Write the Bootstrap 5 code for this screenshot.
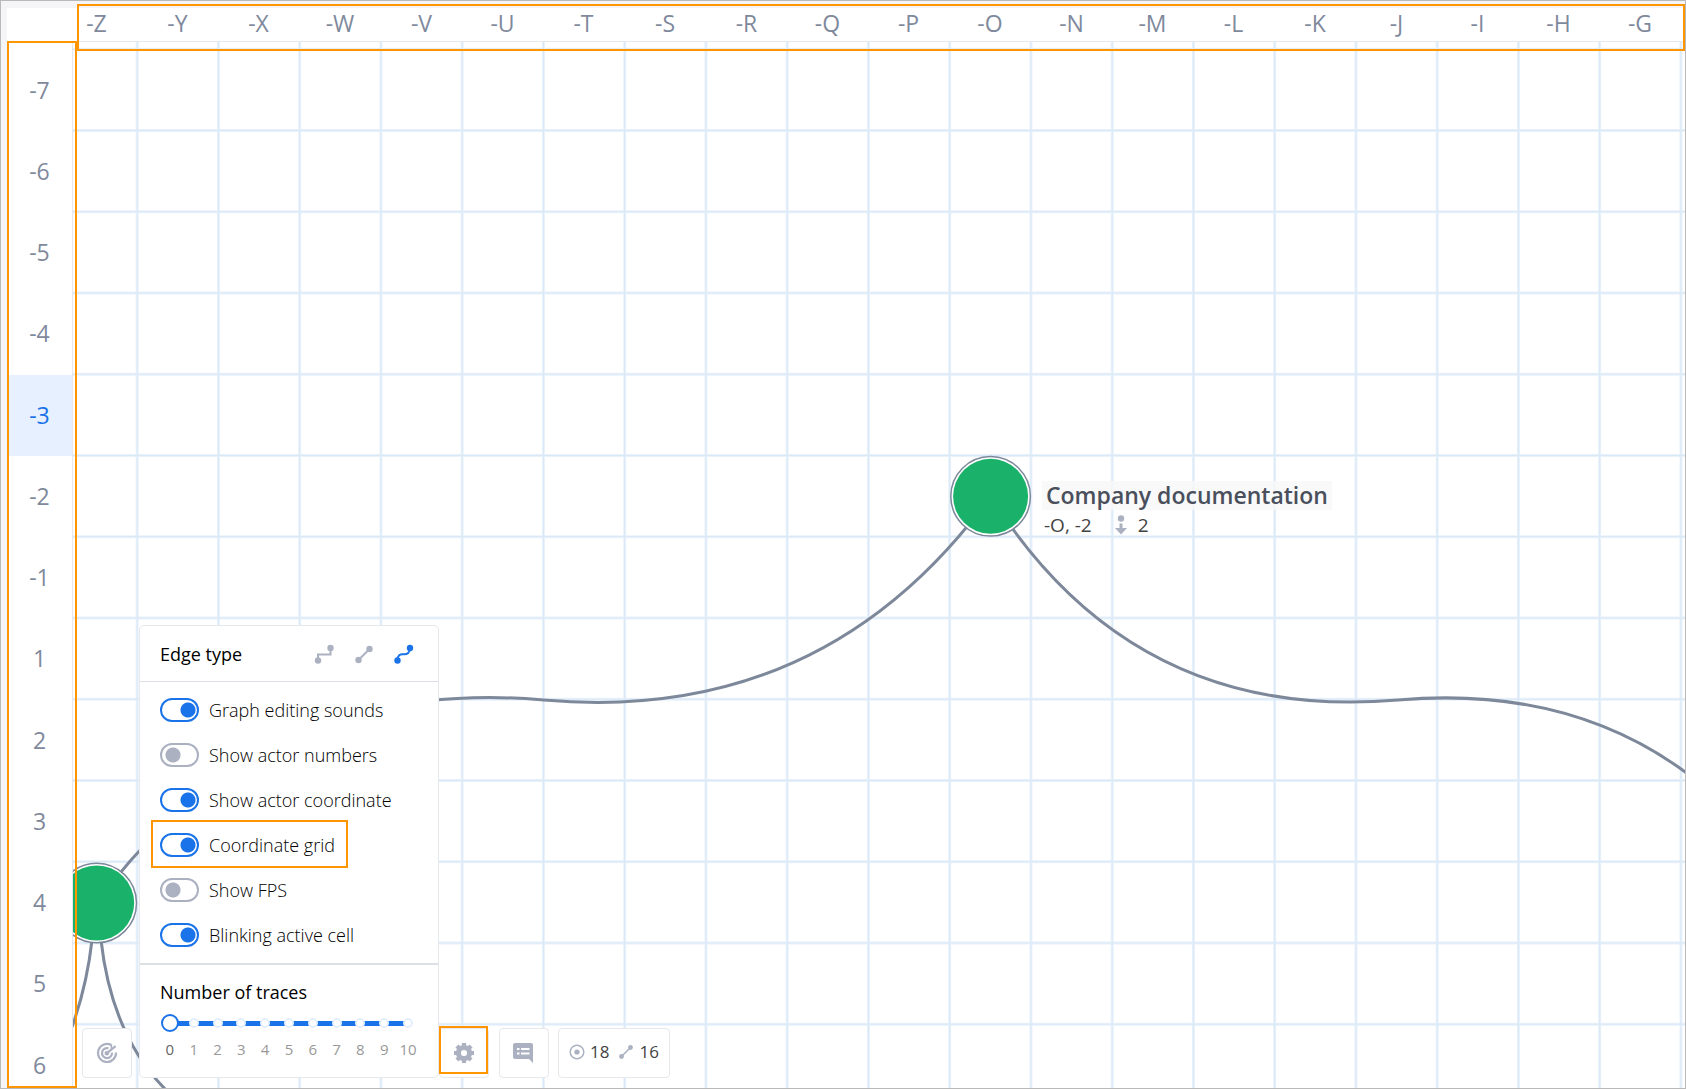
<!DOCTYPE html>
<html lang="en">
<head>
<meta charset="utf-8">
<meta name="viewport" content="width=device-width, initial-scale=1">
<title>Graph layer</title>
<link href="https://cdn.jsdelivr.net/npm/bootstrap@5.3.0/dist/css/bootstrap.min.css" rel="stylesheet">
<style>
  :root { --accent: #1a73e8; --mark: #ff9500; --muted: #abb1c0; --rule: #e6e8ec; --axis: #7f899c; }
  body { font-family: "Open Sans", "Noto Sans", sans-serif; }
  .frame { height: 100vh; border: 1px solid #b9b9b9; background: #f5f5f7; padding: 7px 0 0 6px; }
  .board { background: #fff; }
  .axis-x { height: 33px; padding-left: 49px; }
  .axis-x span, .axis-y span { color: var(--axis); font-size: 23px; line-height: 30px; }
  .axis-x span { flex: 0 0 81px; text-align: center; }
  .axis-x span:nth-child(4n) { flex-basis: 82px; }
  .axis-y { width: 65px; padding-top: 9px; }
  .axis-y span { flex: 0 0 81px; display: flex; align-items: center; justify-content: center; padding-bottom: 2px; }
  .axis-y span:nth-child(4n) { flex-basis: 82px; }
  .axis-y .current { background: #e6f0fe; color: var(--accent); }
  .stage { border-top: 1px solid var(--rule); border-left: 1px solid var(--rule); }
  .outline { position: absolute; border: 2px solid var(--mark); pointer-events: none; z-index: 5; }
  .outline-x { left: 70px; right: 0; top: -4px; height: 47px; }
  .outline-y { left: 0; width: 70px; top: 33px; bottom: 0; }
  .outline-gear { left: 0; right: 1px; top: -2px; bottom: 4px; }
  .node-label { position: absolute; left: 969px; top: 439px; color: #4a4f5c; }
  .node-name { background: rgba(247, 247, 248, .8); font-size: 23px; line-height: 29px; font-weight: 600; padding: 0 4px; }
  .node-meta { font-size: 19px; line-height: 30px; color: #444; padding-left: 2px; gap: 22px; }
  .node-count { gap: 10px; }
  .dock { position: absolute; left: 75px; bottom: 10px; z-index: 3; }
  .tool { width: 50px; height: 50px; background: #fff; border: 1px solid var(--rule); border-radius: 4px; padding: 0; color: var(--muted); display: flex; align-items: center; justify-content: center; }
  .tool-comment { margin: 0 9px 0 10px; padding-right: 2px; }
  .counts { height: 50px; background: #fff; border: 1px solid var(--rule); border-radius: 4px; color: #444; font-size: 17px; padding: 0 10px 3px; gap: 5px; }
  .counts svg, .node-meta svg { color: var(--muted); }
  .settings { width: 300px; background: #fff; border: 1px solid var(--rule); border-radius: 5px; color: #000; margin-left: 7px; }
  .settings h2 { font-size: 18px; line-height: 24px; font-weight: 500; margin: 0; }
  .settings-head { height: 56px; padding: 0 24px 0 20px; border-bottom: 1px solid #dcdfe6; }
  .edge-list { gap: 20px; }
  .edge { border: 0; background: none; padding: 0; width: 20px; height: 20px; color: var(--muted); display: flex; }
  .edge.active { color: var(--accent); }
  .switches { padding: 5px 20px 6px; border-bottom: 2px solid #dcdfe4; }
  .switches .form-check { height: 45px; min-height: 0; margin: 0; padding: 0; display: flex; align-items: center; gap: 10px; position: relative; }
  .switches .form-check-input { width: 39px; height: 24px; margin: 0; float: none; border: 2px solid var(--muted); border-radius: 12px; background: radial-gradient(circle at 11px 10px, var(--muted) 7px, transparent 8px) #fff; box-shadow: none; }
  .switches .form-check-input:checked { border-color: var(--accent); background: radial-gradient(circle at 26px 10px, var(--accent) 7px, transparent 8px) #fff; }
  .switches label { font-size: 18px; line-height: 24px; font-weight: 300; }
  .marked::after { content: ""; position: absolute; left: -9px; width: 197px; top: -2px; height: 48px; border: 2px solid var(--mark); }
  .traces { padding: 15px 20px 18px; }
  .traces label { font-size: 18px; line-height: 24px; font-weight: 500; display: block; }
  .track { position: relative; width: 256px; height: 18px; margin: 10px 0 0 1px; }
  .stops { position: absolute; left: 4px; right: 4px; top: 4px; height: 10px; display: flex; justify-content: space-between; background: linear-gradient(var(--accent), var(--accent)) 0 3px / 240px 5px no-repeat; }
  .stops i { width: 10px; height: 10px; border-radius: 50%; border: 2px solid #e4effd; background: #fff; }
  .track input { position: absolute; left: 0; top: 0; width: 100%; height: 18px; margin: 0; -webkit-appearance: none; appearance: none; background: transparent; }
  .track input::-webkit-slider-thumb { -webkit-appearance: none; width: 18px; height: 18px; border: 2px solid var(--accent); border-radius: 50%; background: #fff; }
  .scale { width: 262px; margin: 7px 0 0 -2px; font-size: 15px; line-height: 20px; color: #999; }
  .scale span { flex: 1 1 0; text-align: center; }
  .scale span:first-child { color: #666; }
</style>
<script src="https://cdn.jsdelivr.net/npm/bootstrap@5.3.0/dist/js/bootstrap.bundle.min.js"></script>
</head>
<body>
<main class="frame">
  <div class="board position-relative d-flex flex-column h-100">
    <div class="axis-x d-flex overflow-hidden flex-shrink-0">
      <span>-Z</span><span>-Y</span><span>-X</span><span>-W</span><span>-V</span><span>-U</span><span>-T</span><span>-S</span><span>-R</span><span>-Q</span><span>-P</span><span>-O</span><span>-N</span><span>-M</span><span>-L</span><span>-K</span><span>-J</span><span>-I</span><span>-H</span><span>-G</span>
    </div>
    <div class="d-flex flex-grow-1 overflow-hidden">
      <div class="axis-y d-flex flex-column flex-shrink-0 overflow-hidden">
        <span>-7</span><span>-6</span><span>-5</span><span>-4</span><span class="current">-3</span><span>-2</span><span>-1</span><span>1</span><span>2</span><span>3</span><span>4</span><span>5</span><span>6</span>
      </div>
      <div class="stage position-relative flex-grow-1 overflow-hidden">
        <svg class="d-block w-100 h-100" aria-hidden="true">
          <g transform="translate(-73 -42)">
            <g fill="none" stroke="#e9f2fb" stroke-width="3" id="grid-soft"></g>
            <g fill="none" stroke="#d9e8f6" stroke-width="1" id="grid-core"></g>
            <g fill="none" stroke="#7d889a" stroke-width="3">
              <path d="M990.6 496.3Q824 725 543.6 700T96.7 903"/>
              <path d="M990.6 496.3Q1133 723 1398 700T1803 903"/>
              <path d="M92 940Q87 985 72 1027"/>
              <path d="M101 940C106 985 120 1045 168 1092"/>
            </g>
            <g fill="#fff" stroke="#7d889a" stroke-width="1.5">
              <circle cx="990.6" cy="496.3" r="39.8"/>
              <circle cx="96.7" cy="903" r="39.8"/>
            </g>
            <g fill="#1ab26b">
              <circle cx="990.6" cy="496.3" r="37.5"/>
              <circle cx="96.7" cy="903" r="37.5"/>
            </g>
          </g>
        </svg>
        <div class="node-label">
          <div class="node-name">Company documentation</div>
          <div class="node-meta d-flex align-items-center">
            <span>-O, -2</span>
            <span class="node-count d-flex align-items-center"><svg width="14" height="20" viewBox="0 0 14 20"><circle cx="7" cy="3.5" r="3.2" fill="currentColor"/><path d="M5.5 8.500h3V13H13L7 19.500 1 13h4.500z" fill="currentColor"/></svg><span>2</span></span>
          </div>
        </div>
      </div>
    </div>

    <div class="dock d-flex align-items-end">
      <button class="tool" type="button" aria-label="Center graph">
        <svg width="22" height="22" viewBox="0 0 22 22" fill="none" stroke="currentColor" stroke-width="2.200"><path d="M15.500 3.200A9 9 0 1 0 20 10.500"/><path d="M12.500 6.300A5 5 0 1 0 16 10.700"/><path d="M10.600 11.400L19.600 4.200"/><circle cx="10.800" cy="11.200" r="1.200" fill="currentColor"/><path d="M15.400 2.600v4.800" stroke-width="1.600"/></svg>
      </button>
      <section class="settings">
        <div class="settings-head d-flex align-items-center">
          <h2 class="me-auto">Edge type</h2>
          <div class="edge-list d-flex">
            <button class="edge" type="button" aria-label="Stepped"><svg width="20" height="20" viewBox="0 0 20 20"><path d="M4 16.500V10.500H16.500V4" fill="none" stroke="currentColor" stroke-width="2"/><circle cx="4" cy="16.500" r="3.200" fill="currentColor"/><circle cx="16.500" cy="4" r="3.200" fill="currentColor"/></svg></button>
            <button class="edge" type="button" aria-label="Straight"><svg width="20" height="20" viewBox="0 0 20 20"><path d="M4.500 16L15.500 5" stroke="currentColor" stroke-width="2"/><circle cx="4.500" cy="16" r="3.200" fill="currentColor"/><circle cx="15.500" cy="5" r="3.200" fill="currentColor"/></svg></button>
            <button class="edge active" type="button" aria-label="Curved"><svg width="20" height="20" viewBox="0 0 20 20"><path d="M3.500 16.500C3.500 11 6 10 9.500 10.300S16 9 16 4" fill="none" stroke="currentColor" stroke-width="2"/><circle cx="3.500" cy="16.500" r="3.200" fill="currentColor"/><circle cx="16" cy="4" r="3.200" fill="currentColor"/></svg></button>
          </div>
        </div>
        <div class="switches">
          <div class="form-check form-switch"><input class="form-check-input" type="checkbox" role="switch" id="s1" checked><label for="s1">Graph editing sounds</label></div>
          <div class="form-check form-switch"><input class="form-check-input" type="checkbox" role="switch" id="s2"><label for="s2">Show actor numbers</label></div>
          <div class="form-check form-switch"><input class="form-check-input" type="checkbox" role="switch" id="s3" checked><label for="s3">Show actor coordinate</label></div>
          <div class="form-check form-switch marked"><input class="form-check-input" type="checkbox" role="switch" id="s4" checked><label for="s4">Coordinate grid</label></div>
          <div class="form-check form-switch"><input class="form-check-input" type="checkbox" role="switch" id="s5"><label for="s5">Show FPS</label></div>
          <div class="form-check form-switch"><input class="form-check-input" type="checkbox" role="switch" id="s6" checked><label for="s6">Blinking active cell</label></div>
        </div>
        <div class="traces">
          <label for="traces">Number of traces</label>
          <div class="track">
            <div class="stops"><i></i><i></i><i></i><i></i><i></i><i></i><i></i><i></i><i></i><i></i><i></i></div>
            <input type="range" id="traces" min="0" max="10" value="0">
          </div>
          <div class="scale d-flex"><span>0</span><span>1</span><span>2</span><span>3</span><span>4</span><span>5</span><span>6</span><span>7</span><span>8</span><span>9</span><span>10</span></div>
        </div>
      </section>
      <div class="position-relative">
        <button class="tool" type="button" aria-label="Settings">
          <svg width="22" height="22" viewBox="0 0 22 22"><g fill="none" stroke="currentColor"><circle cx="11" cy="11" r="5.600" stroke-width="5"/><path d="M11 1v20M1 11h20M3.900 3.900l14.200 14.200M18.100 3.900L3.900 18.100" stroke-width="4.200" stroke-dasharray="3 14 3"/></g></svg>
        </button>
        <div class="outline outline-gear"></div>
      </div>
      <button class="tool tool-comment" type="button" aria-label="Comments">
        <svg width="22" height="22" viewBox="0 0 22 22"><path d="M3 1h16a2 2 0 0 1 2 2v18l-4-4H3a2 2 0 0 1-2-2V3a2 2 0 0 1 2-2z" fill="currentColor"/><path d="M5 7h2.500M9 7h8.500M5 11.500h2.500M9 11.500h8.500" stroke="#fff" stroke-width="2"/></svg>
      </button>
      <div class="counts d-flex align-items-center">
        <svg width="16" height="16" viewBox="0 0 16 16"><circle cx="8" cy="8" r="6.800" fill="none" stroke="currentColor" stroke-width="1.500"/><circle cx="8" cy="8" r="2.600" fill="currentColor"/></svg>
        <span class="me-1">18</span>
        <svg width="16" height="16" viewBox="0 0 16 16"><path d="M3.500 12.500L12.500 3.500" stroke="currentColor" stroke-width="1.600"/><circle cx="3.500" cy="12.500" r="2.400" fill="currentColor"/><circle cx="12.500" cy="3.500" r="2.400" fill="currentColor"/></svg>
        <span>16</span>
      </div>
    </div>

    <div class="outline outline-x"></div>
    <div class="outline outline-y"></div>
  </div>
</main>
<script>
  // One line per cell border, far enough to cover wide windows.
  const cell = 81.25;
  let lines = '';
  for (let i = 0; i < 50; i++) {
    lines += `M${137.2 + i * cell} 0V3000M0 ${49.2 + i * cell}H4000`;
  }
  for (const id of ['grid-soft', 'grid-core']) {
    document.getElementById(id).innerHTML = `<path d="${lines}"/>`;
  }
</script>
</body>
</html>
